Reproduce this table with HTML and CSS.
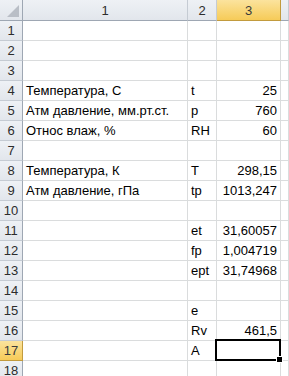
FILE: index.html
```html
<!DOCTYPE html>
<html>
<head>
<meta charset="utf-8">
<link rel="stylesheet" href="styles.css">
</head>
<body>
<div class="sheet">
  <div class="hd corner"><span class="tri"></span></div>
  <div class="hd col">1</div>
  <div class="hd col">2</div>
  <div class="hd col sel">3</div>
  <div class="hd col last"></div>

  <div class="hd row">1</div><div class="c"></div><div class="c"></div><div class="c"></div><div class="c"></div>
  <div class="hd row">2</div><div class="c"></div><div class="c"></div><div class="c"></div><div class="c"></div>
  <div class="hd row">3</div><div class="c"></div><div class="c"></div><div class="c"></div><div class="c"></div>
  <div class="hd row">4</div><div class="c">Температура, С</div><div class="c">t</div><div class="c num">25</div><div class="c"></div>
  <div class="hd row">5</div><div class="c over">Атм давление, мм.рт.ст.</div><div class="c">p</div><div class="c num">760</div><div class="c"></div>
  <div class="hd row">6</div><div class="c">Относ влаж, %</div><div class="c">RH</div><div class="c num">60</div><div class="c"></div>
  <div class="hd row">7</div><div class="c"></div><div class="c"></div><div class="c"></div><div class="c"></div>
  <div class="hd row">8</div><div class="c">Температура, К</div><div class="c">T</div><div class="c num">298,15</div><div class="c"></div>
  <div class="hd row">9</div><div class="c">Атм давление, гПа</div><div class="c">tp</div><div class="c num">1013,247</div><div class="c"></div>
  <div class="hd row">10</div><div class="c"></div><div class="c"></div><div class="c"></div><div class="c"></div>
  <div class="hd row">11</div><div class="c"></div><div class="c">et</div><div class="c num">31,60057</div><div class="c"></div>
  <div class="hd row">12</div><div class="c"></div><div class="c">fp</div><div class="c num">1,004719</div><div class="c"></div>
  <div class="hd row">13</div><div class="c"></div><div class="c">ept</div><div class="c num">31,74968</div><div class="c"></div>
  <div class="hd row">14</div><div class="c"></div><div class="c"></div><div class="c"></div><div class="c"></div>
  <div class="hd row">15</div><div class="c"></div><div class="c">e</div><div class="c"></div><div class="c"></div>
  <div class="hd row">16</div><div class="c"></div><div class="c">Rv</div><div class="c num">461,5</div><div class="c"></div>
  <div class="hd row sel">17</div><div class="c"></div><div class="c">A</div><div class="c active"><span class="handle"></span></div><div class="c"></div>
  <div class="hd row tail">18</div><div class="c tail"></div><div class="c tail"></div><div class="c tail"></div><div class="c tail"></div>
</div>
</body>
</html>
```

FILE: styles.css
```css
html, body {
  margin: 0;
  padding: 0;
  background: #ffffff;
  overflow: hidden;
}
.sheet {
  display: grid;
  grid-template-columns: 23px 165px 29px 64px 1fr;
  grid-template-rows: 21px;
  grid-auto-rows: 20px;
  font-family: "Liberation Sans", Arial, sans-serif;
  font-size: 13px;
  color: #000;
  width: 289px;
  height: 376px;
  overflow: hidden;
}
.hd {
  box-sizing: border-box;
  background: linear-gradient(#eef1f5, #e2e6ec);
  border-right: 1px solid #c5cbd3;
  border-bottom: 1px solid #c5cbd3;
  color: #2c2c2c;
  display: flex;
  align-items: center;
  justify-content: center;
  font-size: 13px;
}
.hd.col {
  border-bottom: 1px solid #9ea7b3;
}
.hd.row {
  border-right: 1px solid #9ea7b3;
}
.hd.row.tail {
  align-items: flex-start;
  padding-top: 2px;
}
.hd.corner {
  position: relative;
  border-bottom: 1px solid #9ea7b3;
  border-right: 1px solid #9ea7b3;
}
.tri {
  position: absolute;
  right: 3px;
  bottom: 3px;
  width: 0;
  height: 0;
  border-left: 12px solid transparent;
  border-bottom: 12px solid #b9bec6;
}
.hd.sel {
  background: linear-gradient(#fbe39d, #f6cb58);
  border-color: #c29b3e;
  color: #3a3a3a;
}
.c {
  box-sizing: border-box;
  border-right: 1px solid #dadcdd;
  border-bottom: 1px solid #dadcdd;
  display: flex;
  align-items: flex-end;
  padding: 0 3px 2px 3px;
  white-space: nowrap;
  line-height: 15px;
}
.c.over {
  overflow: visible;
  position: relative;
  z-index: 1;
  background: #fff;
}
.num {
  justify-content: flex-end;
}
.active {
  position: relative;
}
.active::after {
  content: "";
  position: absolute;
  left: -2px;
  top: -2px;
  right: -1px;
  bottom: -1px;
  border: 2px solid #000;
}
.handle {
  position: absolute;
  right: -3px;
  bottom: -3px;
  width: 5px;
  height: 5px;
  background: #000;
  border: 1px solid #fff;
  z-index: 2;
}
```
